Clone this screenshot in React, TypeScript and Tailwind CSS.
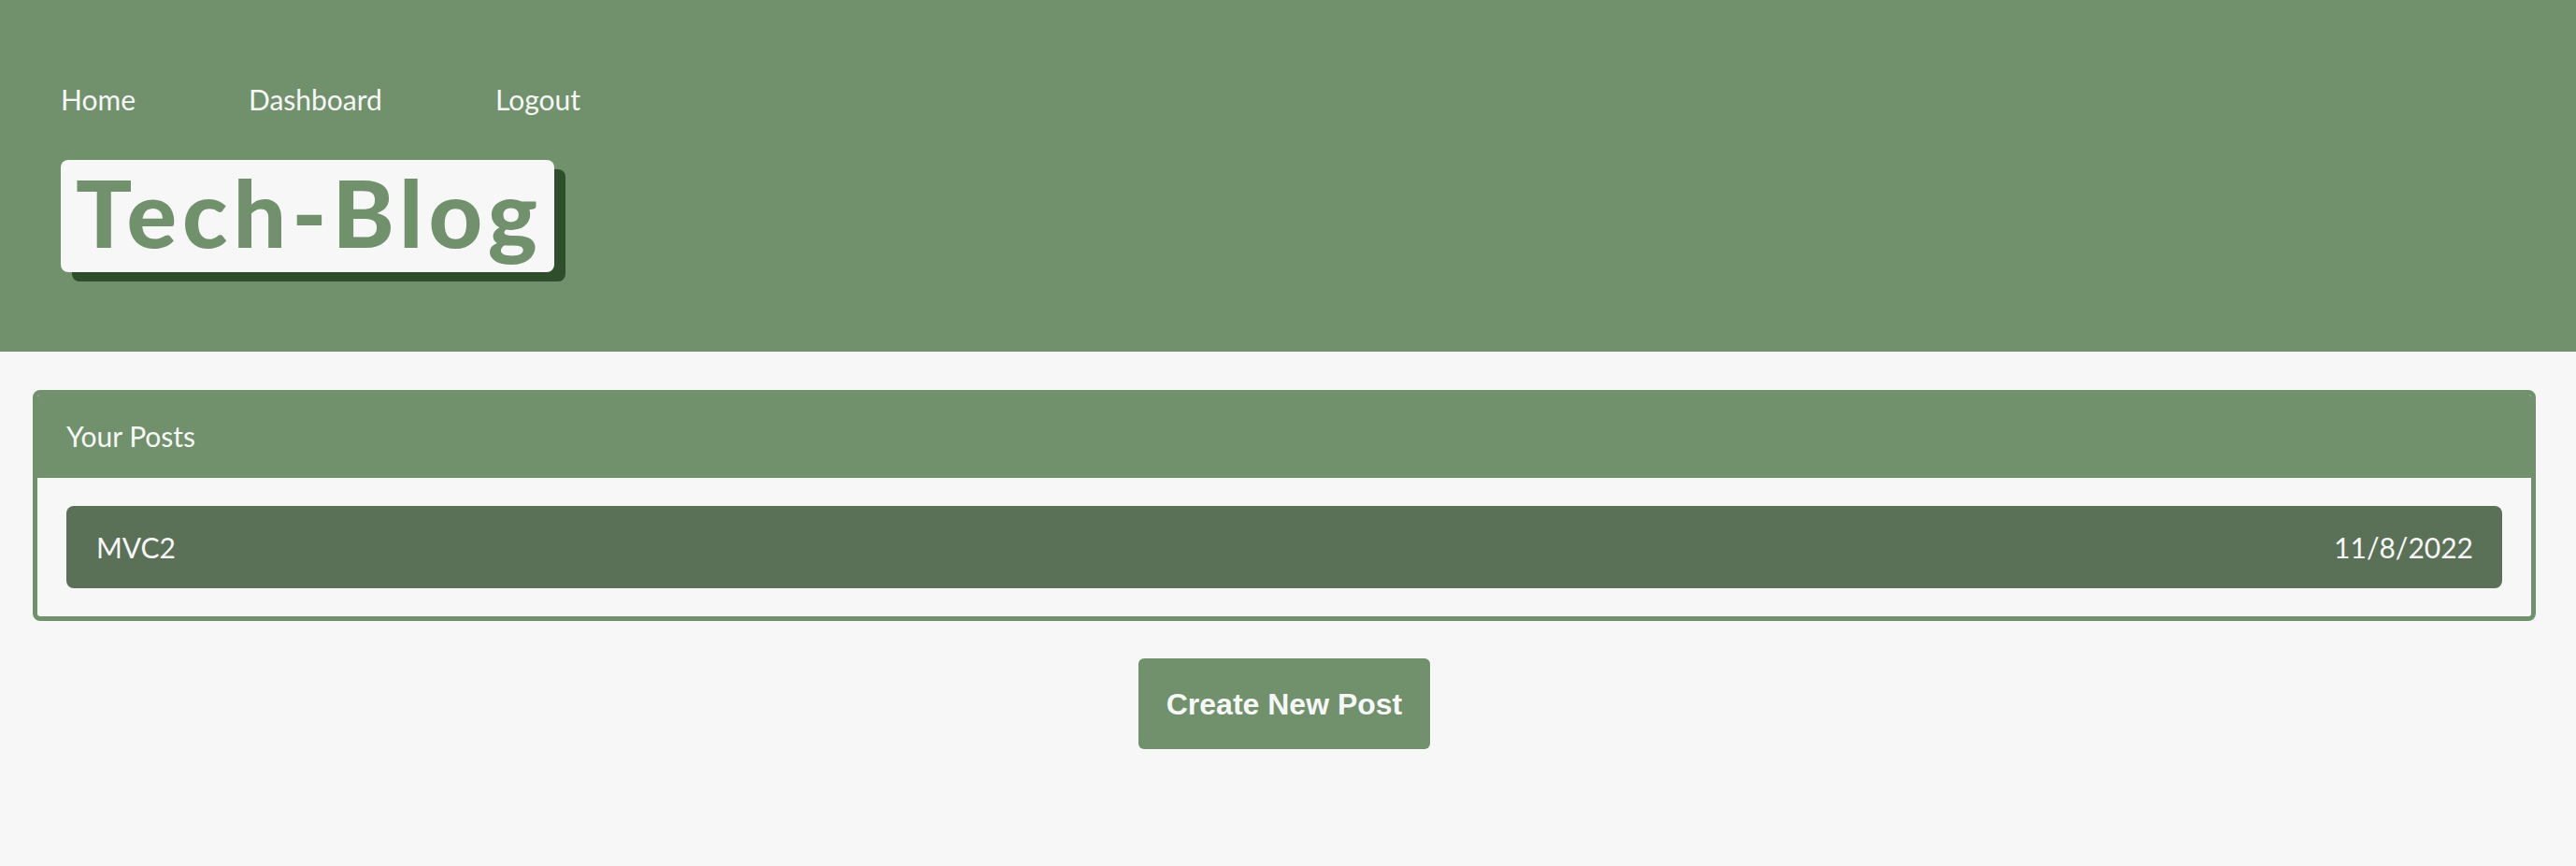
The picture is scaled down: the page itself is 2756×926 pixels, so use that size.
import React from "react";

export default function App() {
  return (
    <div className="min-h-screen bg-[#f7f7f7] font-['Lato','Open_Sans',sans-serif]">
      <header className="bg-[#70916c] h-[376px] pl-[65px] pt-[88px]">
        <nav className="flex gap-[121px] text-[30px] leading-[36px] text-[#f7f7f7]">
          <a href="#">Home</a>
          <a href="#">Dashboard</a>
          <a href="#">Logout</a>
        </nav>
        <div className="mt-[47px] flex">
          <h1 className="bg-[#f7f7f7] rounded-[8px] shadow-[12px_10px_0_#2f4f2c] pl-[16px] pr-[12px] h-[120px] text-[100px] leading-[110px] font-black text-[#70916c] tracking-[6px]">
            Tech-Blog
          </h1>
        </div>
      </header>
      <main className="pt-[41px] pl-[35px] pr-[43px]">
        <section className="border-[5px] border-[#70916c] rounded-[8px] overflow-hidden">
          <div className="bg-[#70916c] h-[89px] pl-[31px] pt-[26px] text-[30px] leading-[36px] text-[#f7f7f7]">
            Your Posts
          </div>
          <div className="px-[31px] py-[30px]">
            <div className="bg-[#5a7057] rounded-[8px] h-[88px] pl-[32px] pr-[31px] flex items-center justify-between text-[30px] leading-[36px] text-[#f7f7f7]">
              <span>MVC2</span>
              <span>11/8/2022</span>
            </div>
          </div>
        </section>
        <div className="flex justify-center pt-[40px]">
          <button className="bg-[#70916c] rounded-[6px] h-[97px] px-[30px] text-[32px] font-bold text-[#f7f7f7] font-['Liberation_Sans',Arial,sans-serif]">
            Create New Post
          </button>
        </div>
      </main>
    </div>
  );
}
